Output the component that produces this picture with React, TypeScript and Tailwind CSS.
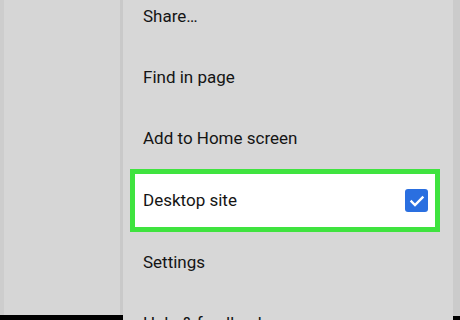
export default function App() {
  const rows = ["Share…", "Find in page", "Add to Home screen"];
  return (
    <div className="flex h-[320px] w-[460px] overflow-hidden bg-[#d6d6d6] font-['Roboto',sans-serif] text-[#141414]">
      {/* Page behind the menu */}
      <div className="flex w-[123px] flex-col">
        <div className="flex flex-1">
          <div className="w-[4px] bg-[#cdcdcd]" />
          <div className="flex-1 bg-[#d6d6d6]" />
          <div className="w-[3px] bg-[#c9c9c9]" />
        </div>
        <div className="h-[5px] bg-black" />
      </div>

      {/* Overflow menu */}
      <div className="flex flex-1 flex-col bg-[#d7d7d7]">
        <div className="-mt-[14px] flex flex-col">
          {rows.map((r) => (
            <div key={r} className="flex h-[61px] items-center pl-[20px] text-[17px]">
              {r}
            </div>
          ))}
          <div className="mr-[13px] ml-[7px] flex h-[63px] items-center justify-between border-[5px] border-[#3fe33f] bg-white pr-[7px] pl-[8px] text-[17px]">
            <span>Desktop site</span>
            <div className="flex h-[23px] w-[23px] items-center justify-center rounded-[3px] bg-[#2a6fe0]">
              <svg width="16" height="16" viewBox="0 0 16 16" fill="none">
                <path d="M2.5 8.5l3.5 3.5 7.5-7.5" stroke="white" strokeWidth="2.4" strokeLinecap="square" />
              </svg>
            </div>
          </div>
          <div className="flex h-[61px] items-center pl-[20px] text-[17px]">Settings</div>
          <div className="flex h-[61px] items-center pl-[20px] text-[17px]">Help &amp; feedback</div>
        </div>
      </div>

      {/* Right edge */}
      <div className="flex w-[7px] flex-col bg-[#cbcbcb]">
        <div className="flex-1" />
        <div className="h-[4px] bg-black" />
      </div>
    </div>
  );
}
